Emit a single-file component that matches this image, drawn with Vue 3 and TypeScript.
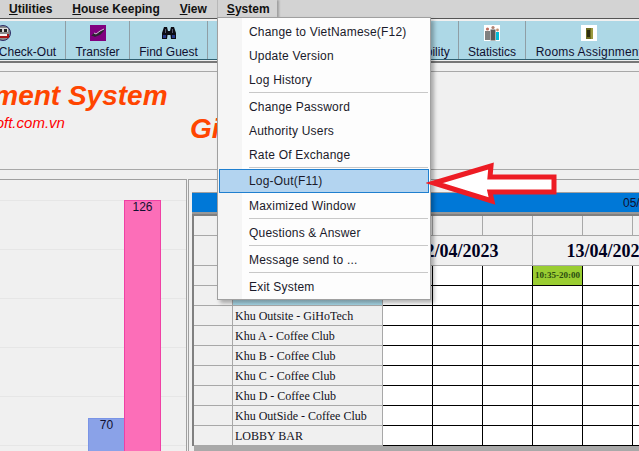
<script setup lang="ts">
const menuGroups: string[][] = [
  ['Change to VietNamese(F12)', 'Update Version', 'Log History'],
  ['Change Password', 'Authority Users', 'Rate Of Exchange'],
  ['Log-Out(F11)', 'Maximized Window'],
  ['Questions & Answer'],
  ['Message send to ...'],
  ['Exit System'],
];

const areas = [
  { name: 'Khu C - GiHoTech' },
  { name: 'Khu D - GiHoTech', active: true },
  { name: 'Khu Outsite - GiHoTech' },
  { name: 'Khu A - Coffee Club' },
  { name: 'Khu B - Coffee Club' },
  { name: 'Khu C - Coffee Club' },
  { name: 'Khu D - Coffee Club' },
  { name: 'Khu OutSide - Coffee Club' },
  { name: 'LOBBY BAR' },
];

// px per unit, the chart is cut off by the window
const scale = 3.9;
const bars = [
  { value: 70, cls: 'bar--blue' },
  { value: 126, cls: 'bar--pink' },
];
</script>

<template>
  <div class="app">
    <div class="menubar">
      <span class="menubar__item"><u>U</u>tilities</span>
      <span class="menubar__item"><u>H</u>ouse Keeping</span>
      <span class="menubar__item"><u>V</u>iew</span>
      <span class="menubar__item menubar__item--open"><u>S</u>ystem</span>
    </div>

    <div class="toolbar">
      <div class="tool tool--checkout">
        <svg class="tool__icon tool__icon--shift" viewBox="0 0 16 16">
          <circle cx="8" cy="8" r="7.5" fill="#8a8a8a" stroke="#2b2b66" />
          <rect x="3" y="3" width="10" height="4" fill="#dcdcdc" />
          <rect x="4" y="4" width="3" height="3" fill="#222" />
          <rect x="9" y="4" width="3" height="3" fill="#222" />
          <rect x="2" y="9" width="12" height="4" fill="#a81818" />
          <rect x="4" y="9" width="8" height="2" fill="#f4f4f4" />
        </svg>
        <span>Check-Out</span>
      </div>
      <div class="tool tool--transfer">
        <svg class="tool__icon" viewBox="0 0 16 16">
          <rect width="16" height="16" fill="#800080" />
          <path d="M1 11 L4 8 L6 9 L10 6 L15 4 L13 7 L10 10 L7 11 L5 12 L3 11 Z" fill="#2a2430" />
          <path d="M4 8 L6 9 L10 6 L14 4" fill="none" stroke="#d8c0d8" stroke-width="1" />
        </svg>
        <span>Transfer</span>
      </div>
      <div class="tool tool--find">
        <svg class="tool__icon" viewBox="0 0 16 16">
          <path d="M3 2 H6 L7 6 H9 L10 2 H13 L15 8 V14 H10 L9.5 10 H6.5 L6 14 H1 V8 Z" fill="#0c0c14" />
          <rect x="2" y="10" width="3" height="3" fill="#26388a" />
          <rect x="11" y="10" width="3" height="3" fill="#26388a" />
          <rect x="4" y="4" width="1" height="4" fill="#5a5a70" />
          <rect x="11" y="4" width="1" height="4" fill="#5a5a70" />
        </svg>
        <span>Find Guest</span>
      </div>
      <div class="tool tool--hidden"></div>
      <div class="tool tool--avail"><span class="tool__blank"></span><span>Availability</span></div>
      <div class="tool tool--stats">
        <svg class="tool__icon" viewBox="0 0 16 16">
          <rect width="16" height="16" fill="#fff" />
          <circle cx="3.5" cy="4" r="1.6" fill="#c07060" />
          <rect x="1" y="6" width="5" height="9" fill="#808080" />
          <circle cx="9" cy="2.5" r="1.6" fill="#b08070" />
          <rect x="6.5" y="4.5" width="5" height="11" fill="#5a5a5a" />
          <circle cx="13.5" cy="5" r="1.4" fill="#c09070" />
          <rect x="12" y="7" width="3" height="8" fill="#00bcd8" />
        </svg>
        <span>Statistics</span>
      </div>
      <div class="tool tool--rooms">
        <svg class="tool__icon" viewBox="0 0 16 16">
          <rect width="16" height="16" fill="#fff" />
          <rect x="5" y="3" width="7" height="11" fill="#6b6b20" />
          <rect x="6" y="5" width="3" height="7" fill="#2c2c10" />
          <rect x="10" y="3" width="2" height="11" fill="#9a9a40" />
        </svg>
        <span class="tool__label--wide">Rooms Assignment</span>
      </div>
    </div>
    <div class="rule"></div>

    <div class="banner">
      <div class="banner__left">
        <div class="banner__title">Management System</div>
        <div class="banner__site">www.gihosoft.com.vn</div>
      </div>
      <div class="banner__brand">GiHoTech</div>
    </div>

    <div class="main">
      <div class="chart">
        <div class="chart__plot">
          <div
            v-for="b in bars"
            :key="b.value"
            class="bar"
            :class="b.cls"
            :style="{ height: b.value * scale + 'px' }"
          >{{ b.value }}</div>
        </div>
      </div>

      <div class="sched">
        <div class="sched__bar">05/04/2023</div>
        <div class="sched__grid">
          <div class="cell"></div>
          <div class="cell"></div>
          <div v-for="n in 6" :key="'h' + n" class="cell"></div>

          <div class="cell"></div>
          <div class="cell"></div>
          <div class="cell cell--date">12/04/2023</div>
          <div class="cell cell--date">13/04/2023</div>

          <template v-for="(a, i) in areas" :key="a.name + i">
            <div class="cell"></div>
            <div class="cell cell--area" :class="{ 'cell--active': a.active }">{{ a.name }}</div>
            <div
              v-for="n in 6"
              :key="n"
              class="cell cell--slot"
              :class="{ 'cell--booked': i === 0 && n === 4 }"
            >{{ i === 0 && n === 4 ? '10:35-20:00' : '' }}</div>
          </template>
        </div>
        <div class="sched__foot"></div>
      </div>
    </div>

    <div class="dropdown">
      <template v-for="(group, g) in menuGroups" :key="g">
        <div v-if="g > 0" class="dropdown__sep"></div>
        <div
          v-for="label in group"
          :key="label"
          class="dropdown__item"
          :class="{ 'dropdown__item--hover': label === 'Log-Out(F11)' }"
        >{{ label }}</div>
      </template>
    </div>

    <svg class="arrow" width="140" height="50" viewBox="0 0 140 50">
      <polygon
        points="8,22 65,5 64,16 128,16 128,31 64,31 66,40"
        fill="#fff"
        stroke="#ed1c24"
        stroke-width="5"
      />
    </svg>
  </div>
</template>

<style scoped>
.app {
  position: relative;
  width: 639px;
  height: 451px;
  overflow: hidden;
  background: #f0f0f0;
  font-family: "Liberation Sans", Arial, sans-serif;
  font-size: 12px;
  color: #111;
}

.menubar {
  display: flex;
  height: 19px;
  margin-left: -1px;
  background: #d3d3d3;
  border-bottom: 1px solid #555;
  box-sizing: border-box;
  font-weight: 700;
  line-height: 18px;
}

.menubar__item {
  padding: 0 10px;
}

.menubar__item--open {
  width: 60px;
  box-sizing: border-box;
  border-left: 1px solid #b8b8b8;
  padding-left: 9px;
  box-shadow: 2px 0 2px rgba(0, 0, 0, 0.25);
}

.toolbar {
  display: flex;
  height: 39px;
  margin-top: 2px;
  background: #add8e6;
  border-bottom: 1px solid #2f5f70;
  box-sizing: border-box;
  color: #101030;
}

.tool {
  flex: none;
  display: flex;
  flex-direction: column;
  align-items: center;
  padding-top: 4px;
  box-sizing: border-box;
  border-right: 1px solid #8f9ea5;
  line-height: 14px;
  white-space: nowrap;
}

.tool__icon {
  width: 16px;
  height: 16px;
  margin-bottom: 4px;
  flex: none;
}

.tool__icon--shift {
  margin-right: 49px;
}

.tool__blank {
  height: 20px;
}

.tool__label--wide {
  margin-left: 1px;
  letter-spacing: 0.2px;
}

.tool--checkout { width: 76px; margin-left: -10px; }
.tool--transfer { width: 64px; }
.tool--find { width: 78px; }
.tool--hidden { width: 177px; }
.tool--avail { width: 74px; }
.tool--stats { width: 67px; }
.tool--rooms { width: 125px; border-right: 0; }

.rule {
  height: 11px;
  box-sizing: border-box;
  border-top: 2px solid #777;
  border-bottom: 1px solid #a8a8a8;
  margin-top: 1px;
  background: #f0f0f0;
}

.banner {
  display: flex;
  height: 98px;
  box-sizing: border-box;
  border-bottom: 1px solid #a8a8a8;
  white-space: nowrap;
}

.banner__left {
  width: 301px;
  flex: none;
  margin-left: -111px;
}

.banner__title {
  margin-top: 7px;
  font-size: 28px;
  line-height: 34px;
  font-weight: 700;
  font-style: italic;
  color: #ff4500;
}

.banner__site {
  margin-left: 35px;
  font-size: 15px;
  line-height: 20px;
  font-style: italic;
  color: #f00;
}

.banner__brand {
  margin-top: 40px;
  font-size: 28px;
  line-height: 34px;
  font-weight: 700;
  font-style: italic;
  color: #ff4500;
}

.main {
  display: flex;
  margin-top: 9px;
  height: 272px;
}

.chart {
  flex: none;
  width: 187px;
  box-sizing: border-box;
  padding-top: 20px;
  border-top: 1px solid #a0a0a0;
  border-right: 1px solid #a0a0a0;
  overflow: hidden;
}

.chart__plot {
  display: flex;
  justify-content: flex-end;
  align-items: flex-end;
  height: 491px;
  padding-right: 25px;
  box-sizing: border-box;
  background: repeating-linear-gradient(#e6e6e6 0 1px, transparent 1px 49px);
}

.bar {
  box-sizing: border-box;
  border: 1px solid;
  text-align: center;
  line-height: 12px;
  color: #101030;
}

.bar--blue {
  width: 36px;
  background: #8aa2e8;
  border-color: #7a94e6;
  border-right: 0;
}

.bar--pink {
  width: 37px;
  background: #fc6eb8;
  border-color: #f040a4;
}

.sched {
  flex: none;
  display: flex;
  flex-direction: column;
  margin-left: 1px;
  padding: 12px 0 0 3px;
  width: 451px;
  box-sizing: border-box;
  border-top: 1px solid #a0a0a0;
  border-left: 1px solid #a0a0a0;
  overflow: hidden;
}

.sched__bar {
  flex: none;
  height: 22px;
  box-sizing: border-box;
  padding-left: 431px;
  background: #0078d7;
  border-top: 1px solid #a0a0a0;
  border-bottom: 2px solid #999;
  line-height: 21px;
  white-space: nowrap;
  color: #101030;
}

.sched__grid {
  flex: none;
  display: grid;
  grid-template-columns: 39px 150px repeat(6, 50px);
  grid-template-rows: 20px 30px repeat(9, 20px);
  width: 489px;
  border-top: 2px solid #808080;
  border-left: 2px solid #808080;
}

.cell {
  box-sizing: border-box;
  border-right: 1px solid #a8a8a8;
  border-bottom: 1px solid #a8a8a8;
  min-width: 0;
}

.cell--date {
  grid-column: span 3;
  text-align: center;
  font-family: "Liberation Serif", "Times New Roman", serif;
  font-size: 18px;
  font-weight: 700;
  line-height: 30px;
  color: #000020;
}

.cell--area {
  padding-left: 2px;
  font-family: "Liberation Serif", "Times New Roman", serif;
  line-height: 21px;
  white-space: nowrap;
  color: #101020;
}

.cell--active {
  background: linear-gradient(#c8e4ee, #a4d4e4);
  font-weight: 700;
}

.cell--slot {
  background: #fff;
  border-color: #000;
}

.cell--booked {
  background: #9acd32;
  font-family: "Liberation Serif", "Times New Roman", serif;
  font-size: 9px;
  font-weight: 700;
  line-height: 19px;
  text-align: center;
  color: #2a4a10;
  white-space: nowrap;
}

.sched__foot {
  flex: 1;
  background: #a9a9a9;
  margin-left: 2px;
}

.dropdown {
  position: absolute;
  left: 217px;
  top: 17px;
  width: 214px;
  height: 283px;
  box-sizing: border-box;
  padding: 1px 1px 0;
  background: linear-gradient(to right, #f5f5f5 24px, #fdfdfd 24px);
  border: 1px solid #a0a0a0;
  box-shadow: 3px 3px 4px rgba(0, 0, 0, 0.3);
  letter-spacing: 0.2px;
  color: #1a1a2a;
}

.dropdown__item {
  height: 24px;
  line-height: 24px;
  padding: 1px 0 0 30px;
  box-sizing: border-box;
  white-space: nowrap;
}

.dropdown__item--hover {
  background: #b3d4f0;
  border: 1px solid #1f7fcf;
  padding: 1px 0 0 29px;
  line-height: 21px;
}

.dropdown__sep {
  height: 1px;
  margin: 1px 1px 1px 30px;
  background: #c8c8c8;
}

.arrow {
  position: absolute;
  left: 426px;
  top: 161px;
}
</style>
